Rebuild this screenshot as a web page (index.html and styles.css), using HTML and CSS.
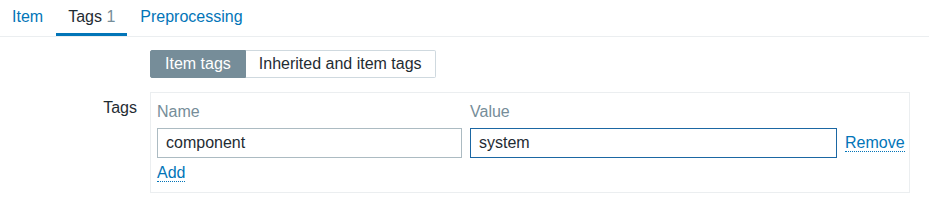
FILE: index.html
```html
<!DOCTYPE html>
<html>
<head>
<meta charset="utf-8">
<link rel="stylesheet" href="styles.css">
</head>
<body>
<div class="tabs">
  <a class="tab">Item</a>
  <a class="tab active">Tags <span class="count">1</span></a>
  <a class="tab">Preprocessing</a>
</div>
<div class="content">
  <div class="row">
    <div class="label"></div>
    <div class="field">
      <div class="segmented">
        <span class="seg on">Item tags</span><span class="seg">Inherited and item tags</span>
      </div>
    </div>
  </div>
  <div class="row tagsrow">
    <div class="label">Tags</div>
    <div class="field">
      <div class="tagbox">
        <div class="grid">
          <div class="head">Name</div>
          <div class="head">Value</div>
          <div></div>
          <div class="input">component</div>
          <div class="input focus">system</div>
          <a class="link remove">Remove</a>
        </div>
        <a class="link add">Add</a>
      </div>
    </div>
  </div>
</div>
</body>
</html>
```
FILE: styles.css
```css
html, body {
  margin: 0;
  padding: 0;
  background: #ffffff;
}
body {
  font-family: "Liberation Sans", Arial, sans-serif;
  font-size: 16px;
  line-height: 18px;
  color: #1f2c33;
}
.tabs {
  display: flex;
  border-bottom: 1px solid #ebeef0;
  height: 36px;
}
.tab {
  display: block;
  padding: 8px 12px 7px;
  border-bottom: 3px solid transparent;
  color: #0275b8;
  margin-right: 1px;
}
.tab.active {
  color: #1f2c33;
  border-bottom-color: #0275b8;
}
.count {
  color: #768d99;
}
.content {
  padding-top: 13px;
}
.row {
  display: flex;
}
.label {
  width: 137px;
  text-align: right;
  flex: none;
  margin-right: 13px;
}
.tagsrow {
  margin-top: 14px;
}
.tagsrow .label {
  padding-top: 7px;
}
.segmented {
  display: flex;
}
.seg {
  display: block;
  padding: 4px 13px;
  border: 1px solid #cfd9df;
  border-left: none;
  border-radius: 0 2px 2px 0;
  background: #fff;
  color: #1f2c33;
}
.seg.on {
  background: #768d99;
  border-color: #768d99;
  border-left: 1px solid #768d99;
  color: #fff;
  padding: 4px 14px;
  border-radius: 2px 0 0 2px;
}
.tagbox {
  width: 747px;
  border: 1px solid #ebeef0;
  padding: 10px 5px 10px 6px;
}
.grid {
  display: grid;
  grid-template-columns: 305px 367px auto;
  column-gap: 8px;
  row-gap: 7px;
  align-items: center;
}
.head {
  color: #768d99;
}
.input {
  height: 28px;
  line-height: 28px;
  border: 1px solid #acbbc2;
  padding: 0 8px;
  box-sizing: content-box;
}
.input.focus {
  border-color: #1b67a3;
}
.link {
  color: #0275b8;
  border-bottom: 1px dotted #0275b8;
  line-height: 17px;
  align-self: center;
  justify-self: start;
}
.add {
  display: inline-block;
  margin-top: 6px;
}
```
